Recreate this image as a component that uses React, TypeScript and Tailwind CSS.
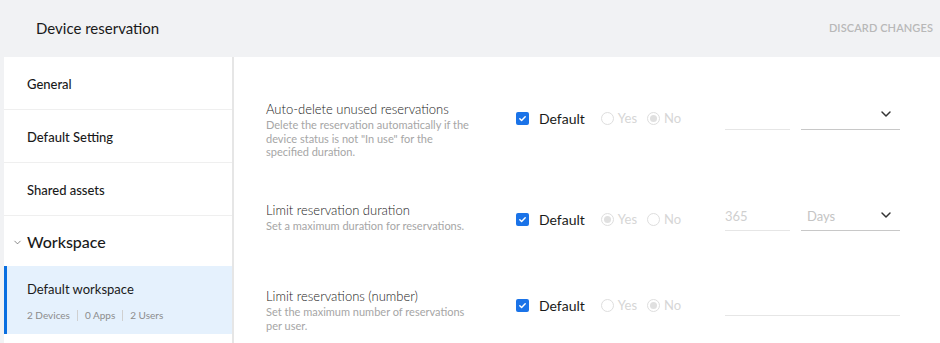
import { ChevronDown } from 'lucide-react';

const font = { fontFamily: 'Lato, "Noto Sans", sans-serif' };

function Checkbox() {
  return (
    <span className="flex h-[13px] w-[13px] items-center justify-center rounded-[2px] bg-[#1a73e8]">
      <svg width="9" height="9" viewBox="0 0 10 10" fill="none">
        <path d="M2 5.2l2 2L8 3" stroke="white" strokeWidth="1.6" strokeLinecap="round" strokeLinejoin="round" />
      </svg>
    </span>
  );
}

function Radio({ label, checked }: { label: string; checked?: boolean }) {
  return (
    <span className="flex items-center gap-[4px]">
      <span className="flex h-[13px] w-[13px] items-center justify-center rounded-full border border-[#dedede]">
        {checked && <span className="h-[7px] w-[7px] rounded-full bg-[#e0e0e0]" />}
      </span>
      <span className="text-[13px] text-[#d6d6d6]">{label}</span>
    </span>
  );
}

function Controls({ yes, value, unit, wide }: { yes?: boolean; value?: string; unit?: string; wide?: boolean }) {
  return (
    <div className="flex items-start">
      <div className="flex h-[13px] w-[209px] items-center">
        <Checkbox />
        <span className="ml-[10px] text-[14px] text-[#1a1a1a]">Default</span>
        <span className="ml-[16px]">
          <Radio label="Yes" checked={yes} />
        </span>
        <span className="ml-[10px]">
          <Radio label="No" checked={!yes} />
        </span>
      </div>
      {wide ? (
        <div className="-mt-[6px] h-[23px] w-[175px] border-b border-[#e6e6e6]" />
      ) : (
        <>
          <div className="-mt-[10px] flex h-[28px] w-[65px] items-center border-b border-[#e6e6e6] text-[13px] text-[#cfcfcf]">
            {value}
          </div>
          <div className="-mt-[10px] ml-[11px] flex h-[28px] w-[99px] items-center justify-between border-b border-[#c8c8c8] pl-[6px] pr-[6px] text-[13px] text-[#c4c4c4]">
            <span>{unit}</span>
            <ChevronDown size={16} strokeWidth={2.2} className="-mt-[3px] text-[#333]" />
          </div>
        </>
      )}
    </div>
  );
}

function SettingRow({
  title,
  desc,
  height,
  children,
}: {
  title: string;
  desc: string;
  height: string;
  children: React.ReactNode;
}) {
  return (
    <div className={`flex items-start ${height}`}>
      <div className="w-[250px] pr-[46px]">
        <div className="text-[13px] font-light leading-[15px] text-[#1a1a1a]">{title}</div>
        <div className="mt-[1px] text-[11px] leading-[13.5px] text-[#a6a6a6]">{desc}</div>
      </div>
      <div className="pt-[10px]">{children}</div>
    </div>
  );
}

function NavItem({ label }: { label: string }) {
  return (
    <div className="flex h-[53px] items-center border-b border-[#efefef] pl-[23px] pt-[3px] text-[13px] font-medium text-[#1a1a1a]">
      {label}
    </div>
  );
}

export default function App() {
  return (
    <div className="flex h-[343px] w-[940px] flex-col overflow-hidden bg-[#f1f2f4]" style={font}>
      <div className="flex h-[57px] shrink-0 items-center justify-between pl-[36px] pr-[7px]">
        <span className="text-[15px] text-[#1a1a1a]">Device reservation</span>
        <span className="text-[11px] font-semibold tracking-[0.1px] text-[#b8b8b8]">DISCARD CHANGES</span>
      </div>
      <div className="flex flex-1">
        <div className="ml-[4px] w-[228px] bg-white">
          <NavItem label="General" />
          <NavItem label="Default Setting" />
          <NavItem label="Shared assets" />
          <div className="flex h-[50px] items-center pl-[8px] pt-[2px]">
            <ChevronDown size={11} strokeWidth={1.5} className="text-[#555]" />
            <span className="ml-[4px] text-[16px] font-medium text-[#1a1a1a]">Workspace</span>
          </div>
          <div className="flex h-[68px] flex-col justify-center border-l-[3px] border-[#0a6fe0] bg-[#e5f1fd] pl-[20px] pt-[3px]">
            <div className="text-[13px] text-[#1a1a1a]">Default workspace</div>
            <div className="mt-[9px] flex items-center text-[10px] text-[#8c8c8c]">
              <span>2 Devices</span>
              <span className="mx-[7px] h-[11px] w-px bg-[#d0d0d0]" />
              <span>0 Apps</span>
              <span className="mx-[7px] h-[11px] w-px bg-[#d0d0d0]" />
              <span>2 Users</span>
            </div>
          </div>
        </div>
        <div className="w-[2px] bg-[#e6e6e6]" />
        <div className="flex-1 bg-white pl-[32px] pt-[45px]">
          <SettingRow
            title="Auto-delete unused reservations"
            desc={'Delete the reservation automatically if the device status is not "In use" for the specified duration.'}
            height="h-[101px]"
          >
            <Controls />
          </SettingRow>
          <SettingRow title="Limit reservation duration" desc="Set a maximum duration for reservations." height="h-[86px]">
            <Controls yes value="365" unit="Days" />
          </SettingRow>
          <SettingRow
            title="Limit reservations (number)"
            desc="Set the maximum number of reservations per user."
            height="h-[60px]"
          >
            <Controls wide />
          </SettingRow>
        </div>
      </div>
    </div>
  );
}
